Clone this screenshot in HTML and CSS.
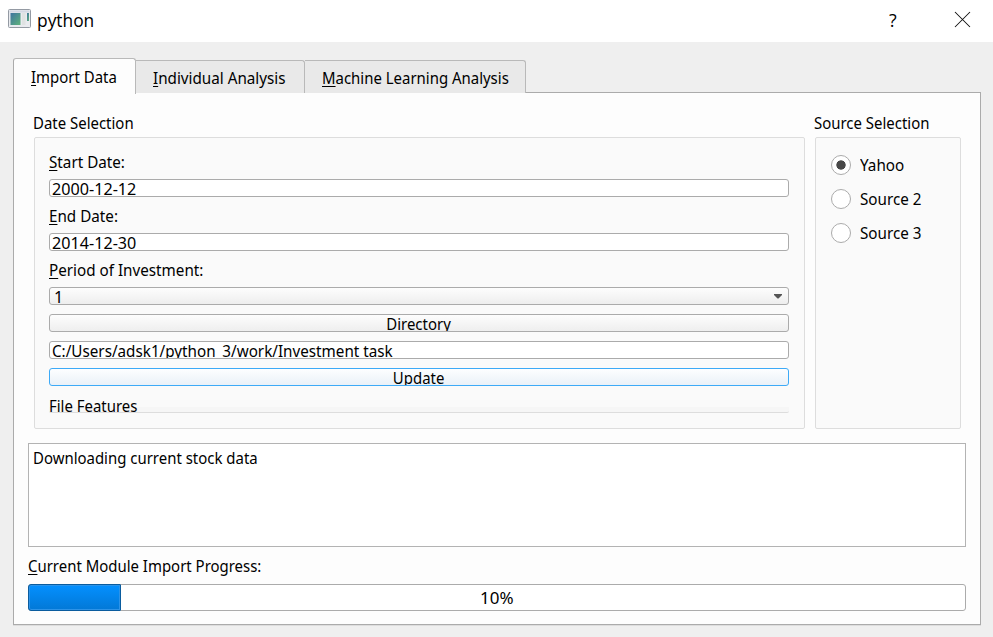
FILE: index.html
```html
<!DOCTYPE html>
<html lang="en">
<head>
<meta charset="utf-8">
<title>python</title>
<link rel="stylesheet" href="styles.css">
</head>
<body>
<header class="titlebar">
  <svg class="app-icon" width="23" height="19" viewBox="0 0 23 19">
    <defs>
      <linearGradient id="pane" x1="0" y1="0" x2="1" y2="1"><stop offset="0" stop-color="#3f74a0"/><stop offset="1" stop-color="#5fb37c"/></linearGradient>
    </defs>
    <rect x=".5" y=".5" width="22" height="18" rx="1" fill="#e9ebef" stroke="#949aa3"/>
    <rect x="1.5" y="1.5" width="20" height="2" fill="#d3d8e4"/>
    <rect x="2.5" y="4" width="10" height="12" fill="url(#pane)"/>
    <rect x="14" y="4" width="3.5" height="12" fill="#dfe2e2"/>
    <rect x="19" y="4" width="2" height="8" fill="url(#pane)"/>
  </svg>
  <span class="title"><span class="t wide">python</span></span>
  <span class="help"><span class="t">?</span></span>
  <svg class="close" width="17" height="17" viewBox="0 0 17 17"><path d="M1 1L16 16M16 1L1 16" stroke="#111" stroke-width="1.05"/></svg>
</header>
<main>
  <nav class="tabs">
    <div class="tab active"><span class="t"><u>I</u>mport Data</span></div>
    <div class="tab individual"><span class="t wide"><u>I</u>ndividual Analysis</span></div>
    <div class="tab machine"><span class="t"><u>M</u>achine Learning Analysis</span></div>
  </nav>
  <section class="pane">
    <div class="groups">
      <div class="group dates">
        <h2><span class="t">Date Selection</span></h2>
        <div class="frame rows">
          <label><span class="t wide"><u>S</u>tart Date:</span></label>
          <div class="field"><span class="t num">2000-12-12</span></div>
          <label><span class="t wide"><u>E</u>nd Date:</span></label>
          <div class="field"><span class="t num">2014-12-30</span></div>
          <label><span class="t wide"><u>P</u>eriod of Investment:</span></label>
          <div class="field combo"><span class="t num">1</span><svg width="8" height="5" viewBox="0 0 8 5"><path d="M0 0H8V1L4.5 4.5H3.5L0 1Z" fill="#555"/></svg></div>
          <div class="field button"><span class="t">Directory</span></div>
          <div class="field"><span class="t wide">C:/Users/adsk1/python_3/work/Investment task</span></div>
          <div class="field button default"><span class="t">Update</span></div>
          <div class="features"><span class="t">File Features</span></div>
        </div>
      </div>
      <div class="group source">
        <h2><span class="t">Source Selection</span></h2>
        <div class="frame radios">
          <div class="radio"><i class="dot on"></i><span class="t wide">Yahoo</span></div>
          <div class="radio"><i class="dot"></i><span class="t wide">Source 2</span></div>
          <div class="radio"><i class="dot"></i><span class="t wide">Source 3</span></div>
        </div>
      </div>
    </div>
    <div class="log"><span class="t">Downloading current stock data</span></div>
    <div class="progress-label"><span class="t"><u>C</u>urrent Module Import Progress:</span></div>
    <div class="progress"><div class="bar"></div><span class="percent"><span class="t">10%</span></span></div>
  </section>
</main>
</body>
</html>
```
FILE: styles.css
```css
* { box-sizing: border-box; }
body {
  margin: 0; width: 993px; height: 637px; overflow: hidden;
  background: #efefef; color: #000;
  font: 16px/20px "Noto Sans", sans-serif;
}
.t { display: inline-block; white-space: nowrap; transform: scaleX(.934); transform-origin: left; }
.t.wide { transform: scaleX(.951); }
.t.num { transform: scaleX(1.01); }
u { text-decoration-thickness: 1px; text-underline-offset: 2px; }
.titlebar { height: 42px; background: #fff; display: flex; align-items: flex-start; padding: 9px 22px 0 8px; }
.title { margin: 0 0 0 6px; font: 18px/22px "Open Sans", sans-serif; flex: 1; }
.title .t.wide { transform: scaleX(.965); }
.help { font: 19px/22px "Open Sans", sans-serif; margin-right: 57px; }
.close { margin-top: 2px; }
main { padding: 16px 12px 0 13px; }
.tabs { display: flex; align-items: flex-end; height: 35px; }
.tab { height: 33px; background: #e9e9e9; border: 1px solid #b9b9b9; border-left: 0; border-bottom: 0; border-radius: 0 3px 0 0; padding: 7px 0 0 17px; }
.tab.active { height: 36px; width: 123px; margin-bottom: -1px; background: #fdfdfd; border-left: 1px solid #ababab; border-radius: 3px 3px 0 0; z-index: 1; padding-top: 8px; }
.tab.individual { width: 169px; }
.tab.machine { width: 221px; }
.pane { height: 533px; margin-top: -1px; background: #fdfdfd; border: 1px solid #ababab; box-shadow: 0 1px #ddd; padding: 20px 14px 0; }
.groups { display: flex; gap: 10px; padding: 0 5px 0 6px; }
.dates { width: 771px; }
.source { width: 146px; }
h2 { margin: 0 0 4px -1px; font: inherit; height: 20px; }
.frame { height: 292px; background: #fafafa; border: 1px solid #ddd; border-radius: 2px; }
.rows { padding: 14px 15px 0 14px; display: grid; grid-auto-rows: 18px; gap: 9px; align-content: start; }
label { display: block; line-height: 20px; }
.field { border: 1px solid #ababab; border-radius: 3px; background: #fff; padding-left: 2px; overflow: hidden; line-height: 18px; }
.combo { background: linear-gradient(#fdfdfd, #eee); display: flex; justify-content: space-between; align-items: center; padding: 0 6px 0 4px; }
.combo .t { margin-top: 1px; }
.button { background: linear-gradient(#fdfdfd, #eee); text-align: center; padding: 0; }
.button .t { transform-origin: center; }
.default { border-color: #3daaf7; background: linear-gradient(#fdfeff, #eaf1f8); }
.features { line-height: 22px; background: linear-gradient(#f6f6f6, #f6f6f6) 0 12px no-repeat; border-bottom: 1px solid #ddd; border-radius: 0 0 2px 2px; }
.radios { padding: 17px 0 0 15px; display: grid; grid-auto-rows: 20px; gap: 14px; align-content: start; }
.radio { display: flex; align-items: center; gap: 9px; }
.dot { width: 20px; height: 20px; border: 1px solid #ababab; border-radius: 50%; background: #fff; }
.dot.on { background: radial-gradient(circle, #484848 4.3px, #fff 5px); }
.log { height: 104px; margin-top: 14px; background: #fff; border: 1px solid #b3b3b3; padding: 4px; }
.progress-label { margin-top: 9px; height: 20px; }
.progress { margin-top: 8px; height: 27px; background: #fff; border: 1px solid #ababab; border-radius: 3px; display: grid; grid-template-rows: 25px; }
.bar { grid-area: 1/1; width: 93px; margin: -1px; border: 1px solid #0a5c9e; border-radius: 3px 1px 1px 3px; background: linear-gradient(#0490ff, #0278d6); box-shadow: inset 0 0 0 1px #2d93e8; }
.percent { grid-area: 1/1; text-align: center; line-height: 27px; }
.percent .t { transform: scaleX(1.06); transform-origin: center; }
```
